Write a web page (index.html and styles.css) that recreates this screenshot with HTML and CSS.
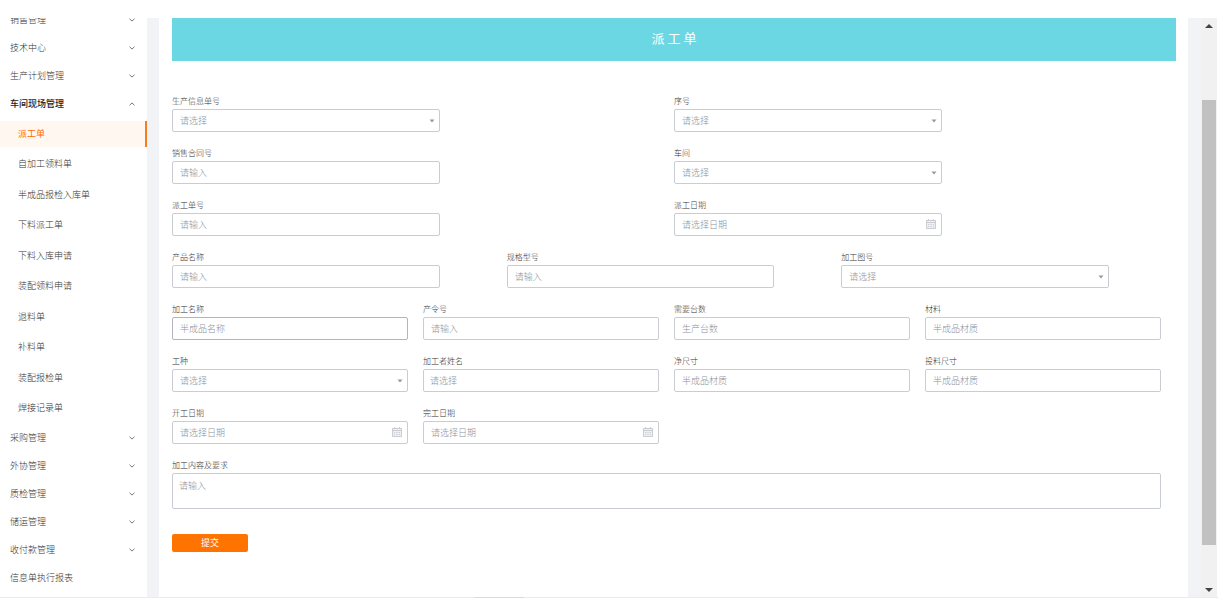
FILE: index.html
```html
<!DOCTYPE html>
<html lang="zh-CN">
<head>
<meta charset="utf-8">
<title>派工单</title>
<link rel="stylesheet" href="styles.css">
</head>
<body>
<svg class="defs" aria-hidden="true">
  <symbol id="down" viewBox="0 0 6 4"><path d="M.5.7 3 3.1 5.5.7" fill="none" stroke="currentColor"/></symbol>
  <symbol id="up" viewBox="0 0 6 4"><path d="M.5 3.3 3 .9l2.5 2.4" fill="none" stroke="currentColor"/></symbol>
  <symbol id="caret" viewBox="0 0 6 4"><path d="M.5.5h5L3 3.5z" fill="currentColor"/></symbol>
  <symbol id="calendar" viewBox="0 0 10 10"><path d="M.5 1.500h9v8h-9z" fill="#eef0f2"/><path d="M.5 1.500h9v8h-9zM.5 3.500h9M2.500 0v2M7.500 0v2" fill="none" stroke="currentColor"/><path d="M2 5.500h6M2 7.500h6" stroke="currentColor" stroke-dasharray="1.200 1.200" fill="none"/></symbol>
</svg>
<div class="app">
  <nav class="sidebar">
    <div class="menu">
      <button class="group">销售管理<svg class="chevron"><use href="#down"/></svg></button>
      <button class="group">技术中心<svg class="chevron"><use href="#down"/></svg></button>
      <button class="group">生产计划管理<svg class="chevron"><use href="#down"/></svg></button>
      <button class="group open">车间现场管理<svg class="chevron"><use href="#up"/></svg></button>
      <div class="submenu">
        <a class="active" href="#">派工单</a>
        <a href="#">自加工领料单</a>
        <a href="#">半成品报检入库单</a>
        <a href="#">下料派工单</a>
        <a href="#">下料入库申请</a>
        <a href="#">装配领料申请</a>
        <a href="#">退料单</a>
        <a href="#">补料单</a>
        <a href="#">装配报检单</a>
        <a href="#">焊接记录单</a>
      </div>
      <button class="group">采购管理<svg class="chevron"><use href="#down"/></svg></button>
      <button class="group">外协管理<svg class="chevron"><use href="#down"/></svg></button>
      <button class="group">质检管理<svg class="chevron"><use href="#down"/></svg></button>
      <button class="group">储运管理<svg class="chevron"><use href="#down"/></svg></button>
      <button class="group">收付款管理<svg class="chevron"><use href="#down"/></svg></button>
      <button class="group">信息单执行报表</button>
    </div>
  </nav>
  <main class="page">
    <h1 class="banner">派 工 单</h1>
    <form class="form">
      <div class="row halves">
        <div class="field"><label for="info">生产信息单号</label><div class="control"><select id="info"><option>请选择</option></select><svg class="caret"><use href="#caret"/></svg></div></div>
        <div class="field"><label for="seq">序号</label><div class="control"><select id="seq"><option>请选择</option></select><svg class="caret"><use href="#caret"/></svg></div></div>
      </div>
      <div class="row halves">
        <div class="field"><label for="contract">销售合同号</label><div class="control"><input id="contract" type="text" placeholder="请输入"></div></div>
        <div class="field"><label for="shop">车间</label><div class="control"><select id="shop"><option>请选择</option></select><svg class="caret"><use href="#caret"/></svg></div></div>
      </div>
      <div class="row halves">
        <div class="field"><label for="order">派工单号</label><div class="control"><input id="order" type="text" placeholder="请输入"></div></div>
        <div class="field"><label for="date">派工日期</label><div class="control"><input id="date" type="text" placeholder="请选择日期"><svg class="calendar"><use href="#calendar"/></svg></div></div>
      </div>
      <div class="row thirds">
        <div class="field"><label for="product">产品名称</label><div class="control"><input id="product" type="text" placeholder="请输入"></div></div>
        <div class="field"><label for="spec">规格型号</label><div class="control"><input id="spec" type="text" placeholder="请输入"></div></div>
        <div class="field"><label for="drawing">加工图号</label><div class="control"><select id="drawing"><option>请选择</option></select><svg class="caret"><use href="#caret"/></svg></div></div>
      </div>
      <div class="row quarters">
        <div class="field"><label for="part">加工名称</label><div class="control"><input id="part" class="strong" type="text" placeholder="半成品名称"></div></div>
        <div class="field"><label for="batch">产令号</label><div class="control"><input id="batch" type="text" placeholder="请输入"></div></div>
        <div class="field"><label for="count">需要台数</label><div class="control"><input id="count" type="text" placeholder="生产台数"></div></div>
        <div class="field"><label for="material">材料</label><div class="control"><input id="material" type="text" placeholder="半成品材质"></div></div>
      </div>
      <div class="row quarters">
        <div class="field"><label for="trade">工种</label><div class="control"><select id="trade"><option>请选择</option></select><svg class="caret"><use href="#caret"/></svg></div></div>
        <div class="field"><label for="worker">加工者姓名</label><div class="control"><input id="worker" class="tight" type="text" placeholder="请选择"></div></div>
        <div class="field"><label for="net">净尺寸</label><div class="control"><input id="net" type="text" placeholder="半成品材质"></div></div>
        <div class="field"><label for="feed">投料尺寸</label><div class="control"><input id="feed" type="text" placeholder="半成品材质"></div></div>
      </div>
      <div class="row quarters">
        <div class="field"><label for="start">开工日期</label><div class="control"><input id="start" type="text" placeholder="请选择日期"><svg class="calendar"><use href="#calendar"/></svg></div></div>
        <div class="field"><label for="finish">完工日期</label><div class="control"><input id="finish" type="text" placeholder="请选择日期"><svg class="calendar"><use href="#calendar"/></svg></div></div>
      </div>
      <div class="row whole">
        <div class="field"><label for="content">加工内容及要求</label><div class="control"><textarea id="content" placeholder="请输入"></textarea></div></div>
      </div>
      <button class="submit" type="button">提交</button>
    </form>
  </main>
  <div class="scrollbar" aria-hidden="true">
    <svg class="arrow" viewBox="0 0 8 4"><path d="M0 4h8L4 0z" fill="currentColor"/></svg>
    <div class="track"><div class="thumb"></div></div>
    <svg class="arrow" viewBox="0 0 8 4"><path d="M0 0h8L4 4z" fill="currentColor"/></svg>
  </div>
</div>
<div class="edge"><span></span></div>
</body>
</html>
```
FILE: styles.css
```css
* { box-sizing: border-box; }
body {
  margin: 0;
  height: 100vh;
  padding: 18px 0 1px;
  display: flex;
  flex-direction: column;
  overflow: hidden;
  background: #fff;
  color: #666;
  font-family: "Noto Sans CJK SC", sans-serif;
  font-size: 9px;
  font-weight: 300;
}
button, input, select, textarea { font: inherit; color: inherit; }
.defs { display: none; }
.app {
  flex: 1;
  min-height: 0;
  display: flex;
  overflow: hidden;
  background: #f1f3f6;
}
.sidebar {
  flex: 0 0 147px;
  margin-right: 12px;
  overflow: hidden;
  background: #fff;
}
.menu { margin-top: -12px; }
.group {
  display: flex;
  align-items: center;
  justify-content: space-between;
  width: 100%;
  height: 28px;
  padding: 0 12px 2px 10px;
  border: 0;
  background: none;
  color: #333;
}
.group.open { color: #222; font-weight: 500; }
.chevron { width: 6px; height: 4px; margin-top: 2px; color: #777; }
.submenu {
  height: 306px;
  padding: 3px 0;
  display: flex;
  flex-direction: column;
  justify-content: space-between;
}
.submenu a {
  padding-left: 18px;
  border-right: 2px solid transparent;
  color: #333;
  line-height: 26px;
  text-decoration: none;
}
.submenu .active {
  border-right-color: #f08020;
  background: #fff7f0;
  color: #ff6a00;
  font-weight: 400;
}
.page {
  flex: 1;
  min-width: 0;
  padding: 0 12px 0 13px;
  background: #fff;
}
.banner {
  margin: 0 0 32px;
  padding-bottom: 3px;
  background: #6bd7e3;
  color: #fff;
  font-size: 13px;
  font-weight: 400;
  line-height: 40px;
  text-align: center;
}
.form { display: flex; flex-direction: column; gap: 13px; }
.row { display: grid; }
.halves { grid-template-columns: repeat(2, 1fr); }
.thirds { grid-template-columns: repeat(3, 1fr); }
.quarters { grid-template-columns: repeat(4, 1fr); }
.halves .control { width: 53.3%; }
.thirds .control { width: 80%; }
.quarters .control, .whole .control { margin-right: 15px; }
.field label {
  display: block;
  color: #333;
  font-size: 8px;
  line-height: 16px;
}
.control { position: relative; display: flex; }
.control input, .control select, .control textarea {
  width: 100%;
  height: 23px;
  padding: 0 7px;
  border: 1px solid #c9cdd2;
  border-radius: 2px;
  outline: 0;
  appearance: none;
  background: #fff;
  color: #8c929c;
}
.control input.strong { border-color: #b2b5ba; }
.control input.tight { padding: 0 6px; }
.control textarea {
  height: 36px;
  padding: 5px 6px;
  line-height: 13px;
  resize: none;
}
::placeholder { color: #8c929c; opacity: 1; }
.caret {
  position: absolute;
  top: 10px;
  right: 5px;
  width: 6px;
  height: 4px;
  color: #999;
}
.calendar {
  position: absolute;
  top: 6px;
  right: 6px;
  width: 10px;
  height: 10px;
  color: #c9ccd0;
}
.submit {
  width: 76px;
  height: 18px;
  margin-top: 12px;
  padding: 0;
  border: 0;
  border-radius: 2px;
  background: #ff7300;
  color: #fff;
  font-weight: 400;
  line-height: 18px;
}
.scrollbar {
  flex: 0 0 16px;
  margin: 0 1px 0 13px;
  padding: 6px 0 5px;
  display: flex;
  flex-direction: column;
  align-items: center;
  background: #f1f1f1;
  box-shadow: 1px 0 #fff;
}
.arrow { width: 8px; height: 4px; color: #444; }
.track {
  flex: 1;
  width: 14px;
  padding: 72px 0 43px;
  display: flex;
}
.thumb { flex: 1; background: #c1c1c1; }
.edge { flex: 0 0 1px; background: #ebeedc; }
.edge span {
  display: block;
  width: 4%;
  height: 1px;
  margin-left: 39%;
  background: #f2d3b8;
}
```
